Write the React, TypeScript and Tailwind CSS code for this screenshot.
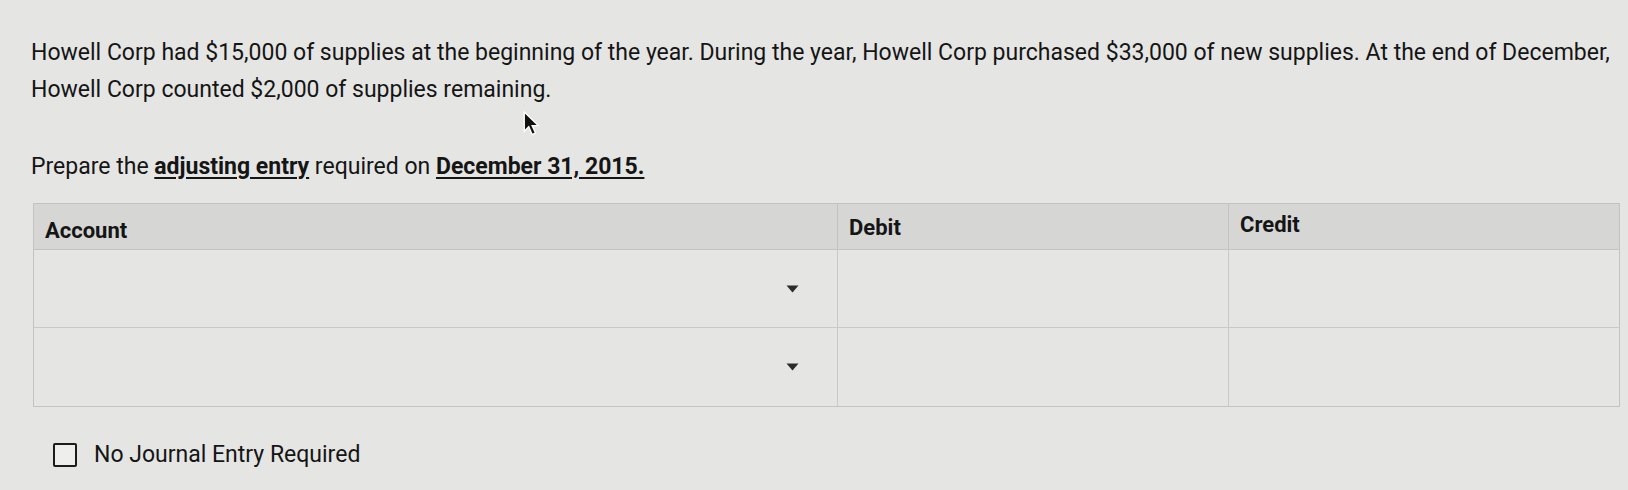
import React, { useState } from "react";

const rows = [0, 1];

const Caret: React.FC = () => (
  <svg width="13" height="8" viewBox="0 0 13 8" className="shrink-0">
    <path d="M0.5 0.5 H12.5 L6.5 7.5 Z" fill="#2b2b2b" />
  </svg>
);

const App: React.FC = () => {
  const [noEntry, setNoEntry] = useState(false);

  return (
    <div
      className="relative min-h-[490px] w-full bg-[#e5e6e4] text-[#151515] overflow-hidden"
      style={{ fontFamily: "Roboto, 'Liberation Sans', sans-serif" }}
    >
      <div className="pl-[31px] pr-[8px] pt-[34px]">
        <p className="text-[23px] leading-[37px]">
          Howell Corp had $15,000 of supplies at the beginning of the year. During the year, Howell Corp purchased
          $33,000 of new supplies. At the end of December,
          <br />
          Howell Corp counted $2,000 of supplies remaining.
        </p>

        <p className="mt-[40px] text-[23px] leading-[37px]">
          Prepare the <span className="font-bold underline underline-offset-[3px]">adjusting entry</span> required on{" "}
          <span className="font-bold underline underline-offset-[3px]">December 31, 2015.</span>
        </p>

        <div className="mt-[18px] ml-[2px] border border-[#c3c4c2]">
          <div className="grid grid-cols-[803px_391px_1fr] bg-[#d6d7d5] h-[46px] border-b border-[#c3c4c2]">
            <div className="pl-[11px] pt-[10px] text-[22px] font-bold">Account</div>
            <div className="pl-[11px] pt-[7px] text-[22px] font-bold border-l border-[#c3c4c2]">Debit</div>
            <div className="pl-[11px] pt-[4px] text-[22px] font-bold border-l border-[#c3c4c2]">Credit</div>
          </div>
          {rows.map((r) => (
            <div
              key={r}
              className={`grid grid-cols-[803px_391px_1fr] h-[78px] ${r === 0 ? "border-b border-[#c9cac8]" : ""}`}
            >
              <div className="flex items-center justify-end pr-[38px]">
                <Caret />
              </div>
              <div className="border-l border-[#c9cac8]" />
              <div className="border-l border-[#c9cac8]" />
            </div>
          ))}
        </div>

        <label className="mt-[34px] ml-[22px] flex items-center gap-[17px] cursor-pointer w-max">
          <span
            className="w-[24px] h-[24px] border-2 border-[#1c1c1c] rounded-[2px] bg-[#eeefed] flex items-center justify-center"
            onClick={() => setNoEntry(!noEntry)}
          >
            {noEntry && <span className="w-[12px] h-[12px] bg-[#1c1c1c]" />}
          </span>
          <span className="text-[23px] leading-[28px]">No Journal Entry Required</span>
        </label>
      </div>

      {/* mouse pointer in the photo */}
      <svg className="absolute left-[522px] top-[111px]" width="18" height="27" viewBox="0 0 16 24">
        <path d="M2 1 L2 18 L6 14 L9 21 L12 19.5 L9 13 L14.5 13 Z" fill="#111" stroke="#fff" strokeWidth="1.2" />
      </svg>
    </div>
  );
};

export default App;
